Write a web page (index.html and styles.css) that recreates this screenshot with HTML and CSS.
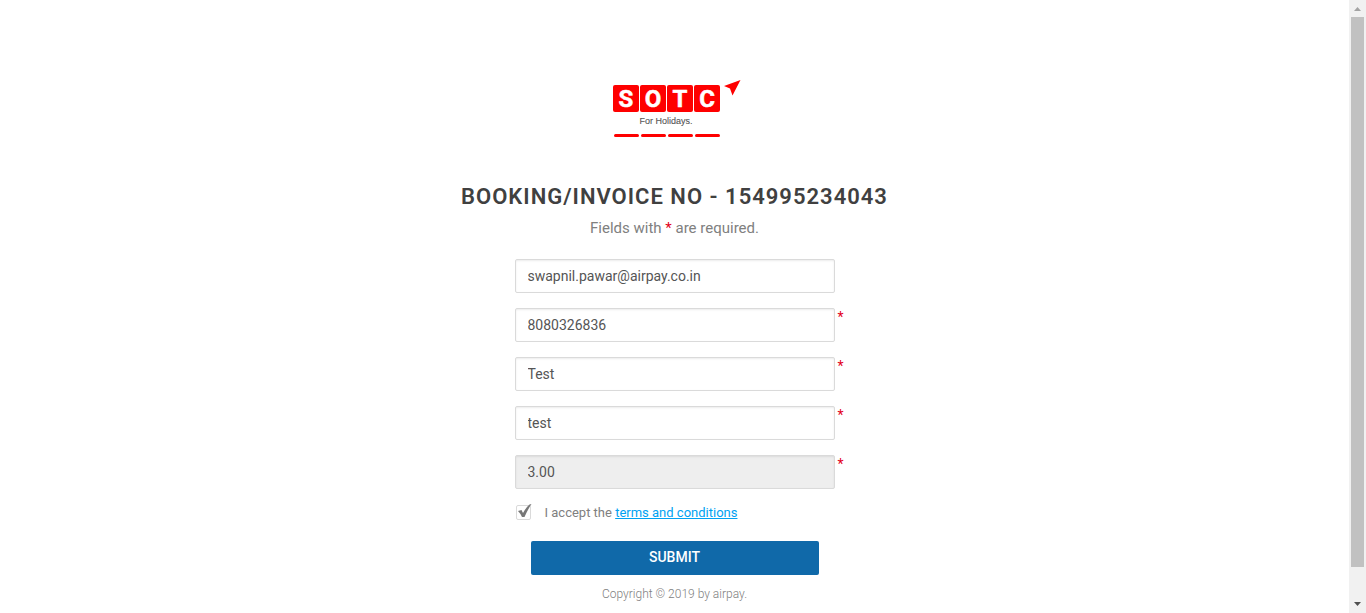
FILE: index.html
```html
<!DOCTYPE html>
<html lang="en">
<head>
<meta charset="utf-8">
<meta name="viewport" content="width=device-width, initial-scale=1">
<title>Booking payment</title>
<link rel="stylesheet" href="styles.css">
</head>
<body>
<main class="page">
  <svg class="logo" width="128" height="59" viewBox="0 0 128 59" role="img" aria-label="SOTC For Holidays">
    <g fill="#fe0000">
      <rect x="0" y="6" width="26" height="27" rx="2"/>
      <rect x="27" y="6" width="26" height="27" rx="2"/>
      <rect x="54" y="6" width="26" height="27" rx="2"/>
      <rect x="81" y="6" width="26" height="27" rx="2"/>
      <rect x="1" y="55" width="25" height="3" rx="1.5"/>
      <rect x="28" y="55" width="25" height="3" rx="1.5"/>
      <rect x="55" y="55" width="25" height="3" rx="1.5"/>
      <rect x="82" y="55" width="25" height="3" rx="1.5"/>
      <path d="M127.500 1 L111 7 L117 9.500 L119.500 16.500 Z"/>
    </g>
    <g class="logo-letters">
      <text x="13" y="28">S</text>
      <text x="40" y="28">O</text>
      <text x="67" y="28">T</text>
      <text x="94" y="28">C</text>
    </g>
    <text class="logo-tag" x="53" y="45">For Holidays.</text>
  </svg>

  <h1 class="title">BOOKING/INVOICE NO - 154995234043</h1>
  <p class="hint">Fields with <span class="star">*</span> are required.</p>

  <form class="form">
    <div class="field">
      <input class="input" type="email" aria-label="Email" value="swapnil.pawar@airpay.co.in">
    </div>
    <div class="field">
      <input class="input" type="tel" aria-label="Phone" value="8080326836">
      <span class="star mark">*</span>
    </div>
    <div class="field">
      <input class="input" type="text" aria-label="First name" value="Test">
      <span class="star mark">*</span>
    </div>
    <div class="field">
      <input class="input" type="text" aria-label="Last name" value="test">
      <span class="star mark">*</span>
    </div>
    <div class="field">
      <input class="input" type="text" aria-label="Amount" value="3.00" readonly>
      <span class="star mark">*</span>
    </div>
    <div class="accept">
      <span class="tick">
        <input class="tick-box" type="checkbox" id="accept" checked>
        <svg class="tick-mark" width="16" height="16" viewBox="0 0 16 16" aria-hidden="true"><path d="M2 7 L5.500 6 L7 9 Q10 3.500 13.500 0.500 L15.500 0 Q11.500 6 8.500 13 L6 13 Q4.500 9.500 2 7 Z" fill="#777"/></svg>
      </span>
      <label for="accept">I accept the <a class="link" href="#terms">terms and conditions</a></label>
    </div>
    <button class="submit" type="submit">SUBMIT</button>
  </form>
  <p class="copyright">Copyright © 2019 by airpay.</p>
</main>
<div class="scrollbar" aria-hidden="true">
  <svg class="arrow" width="17" height="17" viewBox="0 0 17 17"><path d="M5 11 L8.500 7 L12 11 Z" fill="#a3a3a3"/></svg>
  <div class="track"><div class="thumb"></div></div>
  <svg class="arrow" width="17" height="17" viewBox="0 0 17 17"><path d="M5 6 L12 6 L8.500 10 Z" fill="#505050"/></svg>
</div>
</body>
</html>
```
FILE: styles.css
```css
* { box-sizing: border-box; }

body {
  margin: 0;
  display: flex;
  min-height: 100vh;
  background: #fff;
  color: #808080;
  font-family: Roboto, "Liberation Sans", sans-serif;
  font-size: 14px;
}

.page {
  flex: 1;
  display: flex;
  flex-direction: column;
  align-items: center;
  padding: 79px 16px 0;
}

.logo { display: block; margin-left: 4px; }

.logo-letters {
  fill: #fff;
  stroke: #fff;
  stroke-width: 0.5px;
  font: bold 24px Roboto, "Liberation Sans", sans-serif;
  text-anchor: middle;
}

.logo-tag {
  fill: #555;
  stroke: #555;
  stroke-width: 0.1px;
  font: 9px "Liberation Sans", Arial, sans-serif;
  text-anchor: middle;
}

.title {
  margin: 45px 0 0;
  color: #404040;
  font-size: 22px;
  font-weight: 600;
  line-height: 28px;
  letter-spacing: 1px;
  text-align: center;
}

.hint {
  margin: 7px 0 0;
  font-size: 15px;
  line-height: 20px;
}

.star { color: #e2001a; }

.form {
  width: 100%;
  max-width: 320px;
  margin-top: 21px;
}

.field {
  position: relative;
  margin-bottom: 15px;
}

.input {
  display: block;
  width: 100%;
  height: 34px;
  padding: 0 12px;
  border: 1px solid #dadada;
  border-radius: 2px;
  background: #fff;
  box-shadow: inset 0 1px 2px rgba(0, 0, 0, 0.08);
  color: #555;
  font: 14px Roboto, "Liberation Sans", sans-serif;
}

.input:read-only { background: #eee; }

.mark {
  position: absolute;
  top: 0;
  left: 100%;
  margin-left: 3px;
  font-size: 14px;
  line-height: 18px;
}

.accept {
  display: flex;
  align-items: center;
  gap: 14px;
  font-size: 13px;
  line-height: 18px;
}

.tick {
  position: relative;
  width: 16px;
  height: 16px;
}

.tick-box {
  appearance: none;
  display: block;
  width: 15px;
  height: 15px;
  margin: 0 1px;
  border: 1px solid #dadada;
  border-radius: 2px;
  background: #fff;
}

.tick-mark {
  position: absolute;
  top: -1px;
  left: 1px;
  pointer-events: none;
}

.link { color: #00a2f2; }

.submit {
  display: block;
  width: 90%;
  height: 34px;
  margin: 19px auto 0;
  padding: 0 0 2px;
  border: 0;
  border-radius: 2px;
  background: #1069a9;
  color: #fff;
  font: 500 14px Roboto, "Liberation Sans", sans-serif;
}

.copyright {
  margin: 10px 0;
  font-size: 12px;
  font-weight: 300;
  line-height: 18px;
}

.scrollbar {
  position: sticky;
  top: 0;
  display: flex;
  flex-direction: column;
  width: 17px;
  height: 100vh;
  background: #f1f1f1;
}

.arrow { display: block; }

.track {
  flex: 1;
  padding: 0 2px;
}

.thumb {
  height: 95%;
  background: #c1c1c1;
}
```
